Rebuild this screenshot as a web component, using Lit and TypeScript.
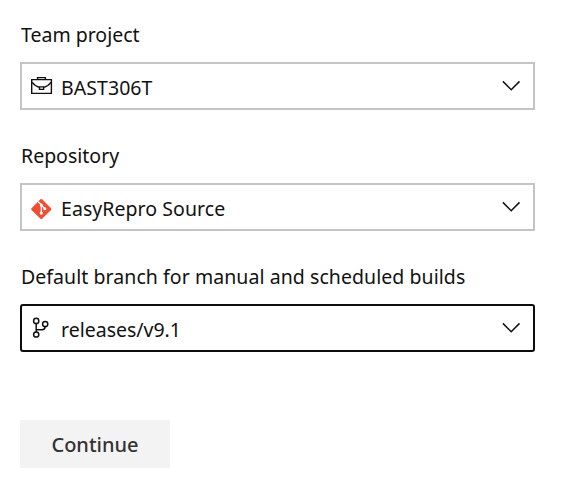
import { LitElement, html, css, svg } from "lit";
import { customElement, property } from "lit/decorators.js";

const icons: Record<string, unknown> = {
  project: svg`<g fill="none" stroke="#111" stroke-width="1.4">
    <path d="M1.7 5.6H21.4V19.4H1.7Z"/><path d="M7.6 5.5V3.6H15.4V5.5"/>
    <path d="M2 8.2C3.8 10.6 6.6 12.8 9.4 13.4M13.8 13.4C16.6 12.8 19.4 10.6 21.2 8.2"/><path d="M9.5 12.9H13.6V15.4H9.5Z"/></g>`,
  git: svg`<rect x="3.8" y="6.6" width="15" height="15" rx="1.2" transform="rotate(45 11.3 14.1)" fill="#f04e32"/>
    <path d="M8.3 6.7L11.3 9.8V18.8M11.3 10L14.8 13.6" fill="none" stroke="#fff" stroke-width="1.3"/>
    <g fill="#fff"><circle cx="11.3" cy="10" r="1.5"/><circle cx="11.3" cy="18.1" r="1.6"/><circle cx="14.8" cy="13.7" r="1.5"/></g>`,
  branch: svg`<g fill="none" stroke="#111" stroke-width="1.5">
    <circle cx="6.2" cy="4.9" r="2.6"/><circle cx="15.2" cy="8" r="2.6"/><circle cx="6.2" cy="18.5" r="2.6"/>
    <path d="M6.2 7.5V15.9M15.2 10.6C15.2 12.8 14 13.8 12 13.8H6.2"/></g>`,
};

@customElement("select-field")
class SelectField extends LitElement {
  @property() label = "";
  @property() value = "";
  @property() icon = "project";
  @property({ type: Boolean, reflect: true }) active = false;

  static styles = css`
    :host { display: block; color: #111; }
    .label { height: 27px; line-height: 28px; padding: 1px 0 14px 1px; white-space: nowrap; }
    .box {
      box-sizing: border-box; height: 48px; display: flex; align-items: center;
      border: 2px solid #c4c4c4; padding: 0 12px 0 8px; background: #fff;
    }
    :host([active]) .label { letter-spacing: 0.06px; }
    :host([active]) .box { border-color: #0c0c0c; border-radius: 3px; }
    .icon { width: 24px; height: 24px; flex: none; overflow: visible; }
    .value { flex: 1; margin-left: 7px; line-height: 28px; padding-top: 3px; letter-spacing: 0.06px; white-space: nowrap; }
    :host([active]) .value { letter-spacing: 0; }
    .chevron { width: 20px; height: 12px; flex: none; }
  `;

  render() {
    return html`
      <div class="label">${this.label}</div>
      <div class="box">
        <svg class="icon" viewBox="0 0 24 24">${icons[this.icon]}</svg>
        <span class="value">${this.value}</span>
        <svg class="chevron" viewBox="0 0 20 12">
          <path d="M1.9 1.4L10.2 9.7L18.5 1.4" fill="none" stroke="#111" stroke-width="1.5" />
        </svg>
      </div>
    `;
  }
}

@customElement("app-root")
class AppRoot extends LitElement {
  static styles = css`
    :host {
      display: block; box-sizing: border-box; width: 565px; height: 493px; padding: 20px 30px 0 20px;
      background: #fff; font: 19.5px "Noto Sans", "Open Sans", sans-serif;
    }
    .form { display: flex; flex-direction: column; gap: 31px; }
    .continue {
      display: block; width: 150px; height: 48px; margin-top: 68px; padding: 1px 0 0; border: 0;
      background: #f3f3f3; color: #333; font: 500 20px "Noto Sans", "Open Sans", sans-serif;
    }
  `;

  render() {
    return html`
      <div class="form">
        <select-field label="Team project" value="BAST306T" icon="project"></select-field>
        <select-field label="Repository" value="EasyRepro Source" icon="git"></select-field>
        <select-field label="Default branch for manual and scheduled builds" value="releases/v9.1" icon="branch" active></select-field>
      </div>
      <button class="continue">Continue</button>
    `;
  }
}
